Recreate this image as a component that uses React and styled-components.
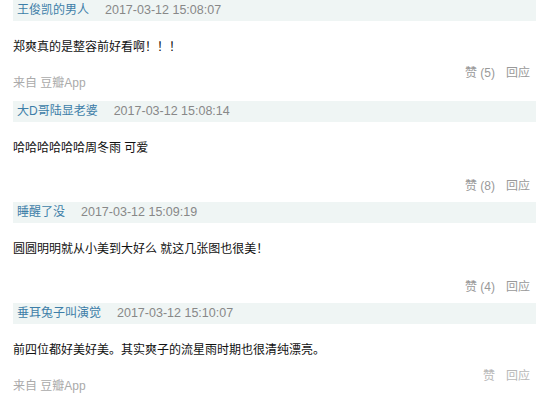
import React from "react";
import styled, { createGlobalStyle } from "styled-components";

const GlobalStyle = createGlobalStyle`
  body {
    margin: 0;
    background: #fff;
    font-family: "Liberation Sans", Arial, "Noto Sans CJK SC", sans-serif;
    font-size: 12px;
  }
`;

const List = styled.div`
  width: 539px;
`;

const Item = styled.div`
  padding: 0 3px 0 13px;
`;

const Header = styled.div`
  display: flex;
  align-items: center;
  height: 21px;
  padding-left: 4px;
  background: #eff5f4;
  font-size: 12px;
  line-height: 21px;
`;

const Name = styled.a`
  color: #3d7ea8;
  text-decoration: none;
  margin-right: 16px;
`;

const Time = styled.span`
  color: #888;
  font-size: 12.5px;
`;

const Body = styled.p`
  margin: 17px 0 0;
  color: #111;
  line-height: 18px;
  height: 18px;
  white-space: nowrap;
`;

const Footer = styled.div`
  display: flex;
  justify-content: space-between;
  height: 24px;
  margin: 10px 0 11px;
  padding-right: 6px;
`;

const Source = styled.span`
  align-self: flex-end;
  color: #aaa;
  line-height: 14px;
`;

const Actions = styled.div`
  display: flex;
  gap: 11px;
  margin-left: auto;
  margin-top: ${props => props.$offset}px;
  align-self: flex-start;
  line-height: 14px;
  color: ${props => (props.$faded ? "#b8b8b8" : "#999")};
`;

const Action = styled.a`
  color: inherit;
  text-decoration: none;
`;

const comments = [
  {
    name: "王俊凯的男人",
    time: "2017-03-12 15:08:07",
    text: "郑爽真的是整容前好看啊！！！",
    likes: 5,
    source: "来自 豆瓣App"
  },
  {
    name: "大D哥陆显老婆",
    time: "2017-03-12 15:08:14",
    text: "哈哈哈哈哈哈周冬雨 可爱",
    likes: 8
  },
  {
    name: "睡醒了没",
    time: "2017-03-12 15:09:19",
    text: "圆圆明明就从小美到大好么 就这几张图也很美！",
    likes: 4
  },
  {
    name: "垂耳兔子叫演觉",
    time: "2017-03-12 15:10:07",
    text: "前四位都好美好美。其实爽子的流星雨时期也很清纯漂亮。",
    source: "来自 豆瓣App",
    faded: true
  }
];

const Comment = ({ comment }) => (
  <Item>
    <Header>
      <Name href="#">{comment.name}</Name>
      <Time>{comment.time}</Time>
    </Header>
    <Body>{comment.text}</Body>
    <Footer>
      {comment.source && <Source>{comment.source}</Source>}
      <Actions $offset={comment.source ? 0 : 12} $faded={comment.faded}>
        <Action href="#">
          赞{comment.likes ? ` (${comment.likes})` : ""}
        </Action>
        <Action href="#">回应</Action>
      </Actions>
    </Footer>
  </Item>
);

const App = () => (
  <>
    <GlobalStyle />
    <List>
      {comments.map((c, i) => (
        <Comment key={i} comment={c} />
      ))}
    </List>
  </>
);

export default App;
